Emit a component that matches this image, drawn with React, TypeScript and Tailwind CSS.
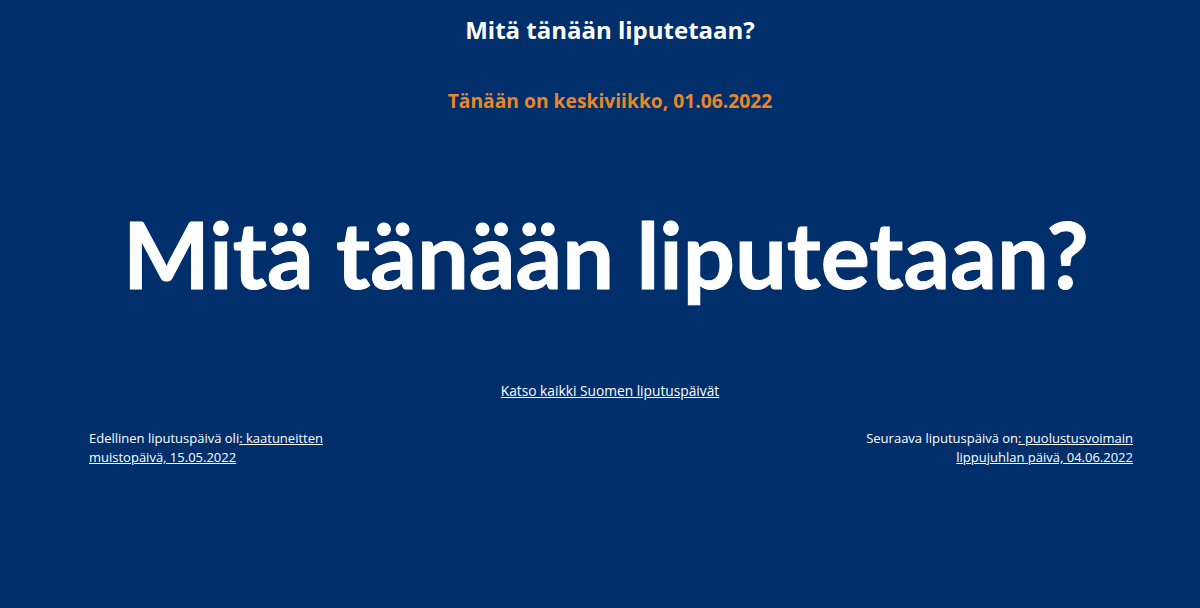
const App = () => {
  return (
    <div className="min-h-screen w-full bg-[#002f6c] text-white font-['Open_Sans',sans-serif]">
      <div className="flex flex-col items-center pl-[20px]">
        <h2 className="mt-[14px] text-[24px] leading-[32px] font-bold">Mitä tänään liputetaan?</h2>
        <p className="mt-[41px] text-[19.25px] leading-[28px] font-bold text-[#e8862a]">Tänään on keskiviikko, 01.06.2022</p>
        <h1 className="mt-[79px] -ml-[8px] text-[92px] leading-[120px] font-bold font-['Lato',sans-serif] [-webkit-text-stroke:1px_white]">Mitä tänään liputetaan?</h1>
        <a href="#" className="mt-[67px] text-[13.75px] leading-[20px] underline">Katso kaikki Suomen liputuspäivät</a>
      </div>
      <div className="mt-[28px] flex justify-between pl-[89px] pr-[67px] text-[13px] leading-[19px]">
        <p className="w-[245px]">
          Edellinen liputuspäivä oli<a href="#" className="underline">: kaatuneitten muistopäivä, 15.05.2022</a>
        </p>
        <p className="w-[275px] text-right">
          Seuraava liputuspäivä on<a href="#" className="underline">: puolustusvoimain lippujuhlan päivä, 04.06.2022</a>
        </p>
      </div>
    </div>
  )
}

export default App
